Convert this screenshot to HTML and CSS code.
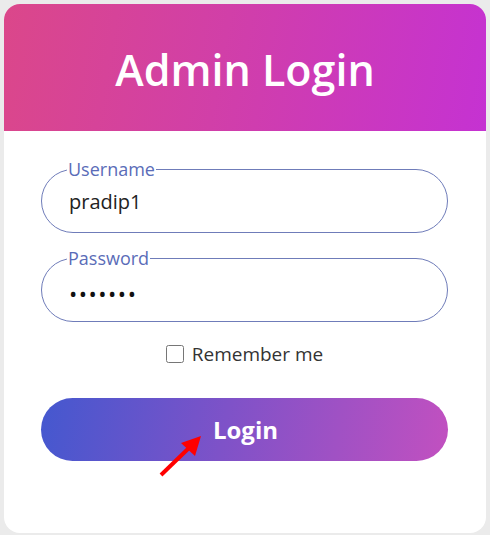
FILE: index.html
```html
<!DOCTYPE html>
<html lang="en">
<head>
<meta charset="utf-8">
<title>Admin Login</title>
<link rel="stylesheet" href="styles.css">
</head>
<body>
<div class="card">
  <div class="card-header">
    <h1 class="title">Admin Login</h1>
  </div>
  <form class="form">
    <fieldset class="field">
      <legend class="field-label">Username</legend>
      <input class="field-input" type="text" value="pradip1">
    </fieldset>
    <fieldset class="field field-password">
      <legend class="field-label">Password</legend>
      <input class="field-input" type="password" value="1234567">
    </fieldset>
    <label class="remember">
      <input class="remember-box" type="checkbox">
      <span>Remember me</span>
    </label>
    <div class="button-wrap">
      <button class="login-btn" type="button">Login</button>
      <svg class="arrow" width="50" height="48" viewBox="0 0 50 48">
        <line x1="4" y1="44" x2="34" y2="15" stroke="#f00" stroke-width="4"/>
        <polygon points="44,5 24,12 38,25" fill="#f00"/>
      </svg>
    </div>
  </form>
</div>
</body>
</html>
```

FILE: styles.css
```css
* { box-sizing: border-box; }
html, body {
  margin: 0;
  padding: 0;
}
body {
  background: #ebebeb;
  padding: 4px;
  font-family: "Open Sans", "Noto Sans", sans-serif;
}
.card {
  width: 482px;
  height: 529px;
  background: #fff;
  border-radius: 16px;
  overflow: hidden;
}
.card-header {
  height: 127px;
  background: linear-gradient(100deg, #db478a 0%, #d13fa8 45%, #c532d2 100%);
  display: flex;
  align-items: center;
  justify-content: center;
}
.title {
  margin: 0;
  color: #fff;
  font-size: 43px;
  font-weight: 600;
  letter-spacing: 0;
  line-height: 1;
  padding-top: 4px;
}
.form {
  padding: 28px 38px 0 37px;
  display: flex;
  flex-direction: column;
}
.field {
  margin: 0;
  border: 1px solid #6f7cb9;
  border-radius: 32px;
  padding: 0 24px 0 25px;
  height: 74px;
}
.field-password {
  margin-top: 15px;
}
.field-label {
  padding: 0 1px;
  color: #5a6cb8;
  font-size: 18px;
  line-height: 20px;
}
.field-input {
  border: none;
  outline: none;
  width: 100%;
  padding: 9px 0 0 2px;
  font-family: inherit;
  font-size: 20px;
  color: #222;
  background: transparent;
}
.field-password .field-input {
  font-size: 22px;
  letter-spacing: 1.5px;
  padding-top: 10px;
  color: #111;
}
.remember {
  align-self: center;
  display: flex;
  align-items: center;
  gap: 8px;
  margin-top: 19px;
  font-size: 19px;
  color: #333;
}
.remember-box {
  margin: 0;
  width: 18px;
  height: 18px;
}
.button-wrap {
  position: relative;
  margin-top: 31px;
}
.login-btn {
  display: block;
  width: 100%;
  height: 63px;
  border: none;
  border-radius: 32px;
  background: linear-gradient(100deg, #4458cf 0%, #7e52c8 45%, #c250c0 100%);
  color: #fff;
  font-family: inherit;
  font-size: 24px;
  font-weight: 700;
  padding: 0 0 0 2px;
}
.arrow {
  position: absolute;
  left: 116px;
  top: 33px;
}
```
